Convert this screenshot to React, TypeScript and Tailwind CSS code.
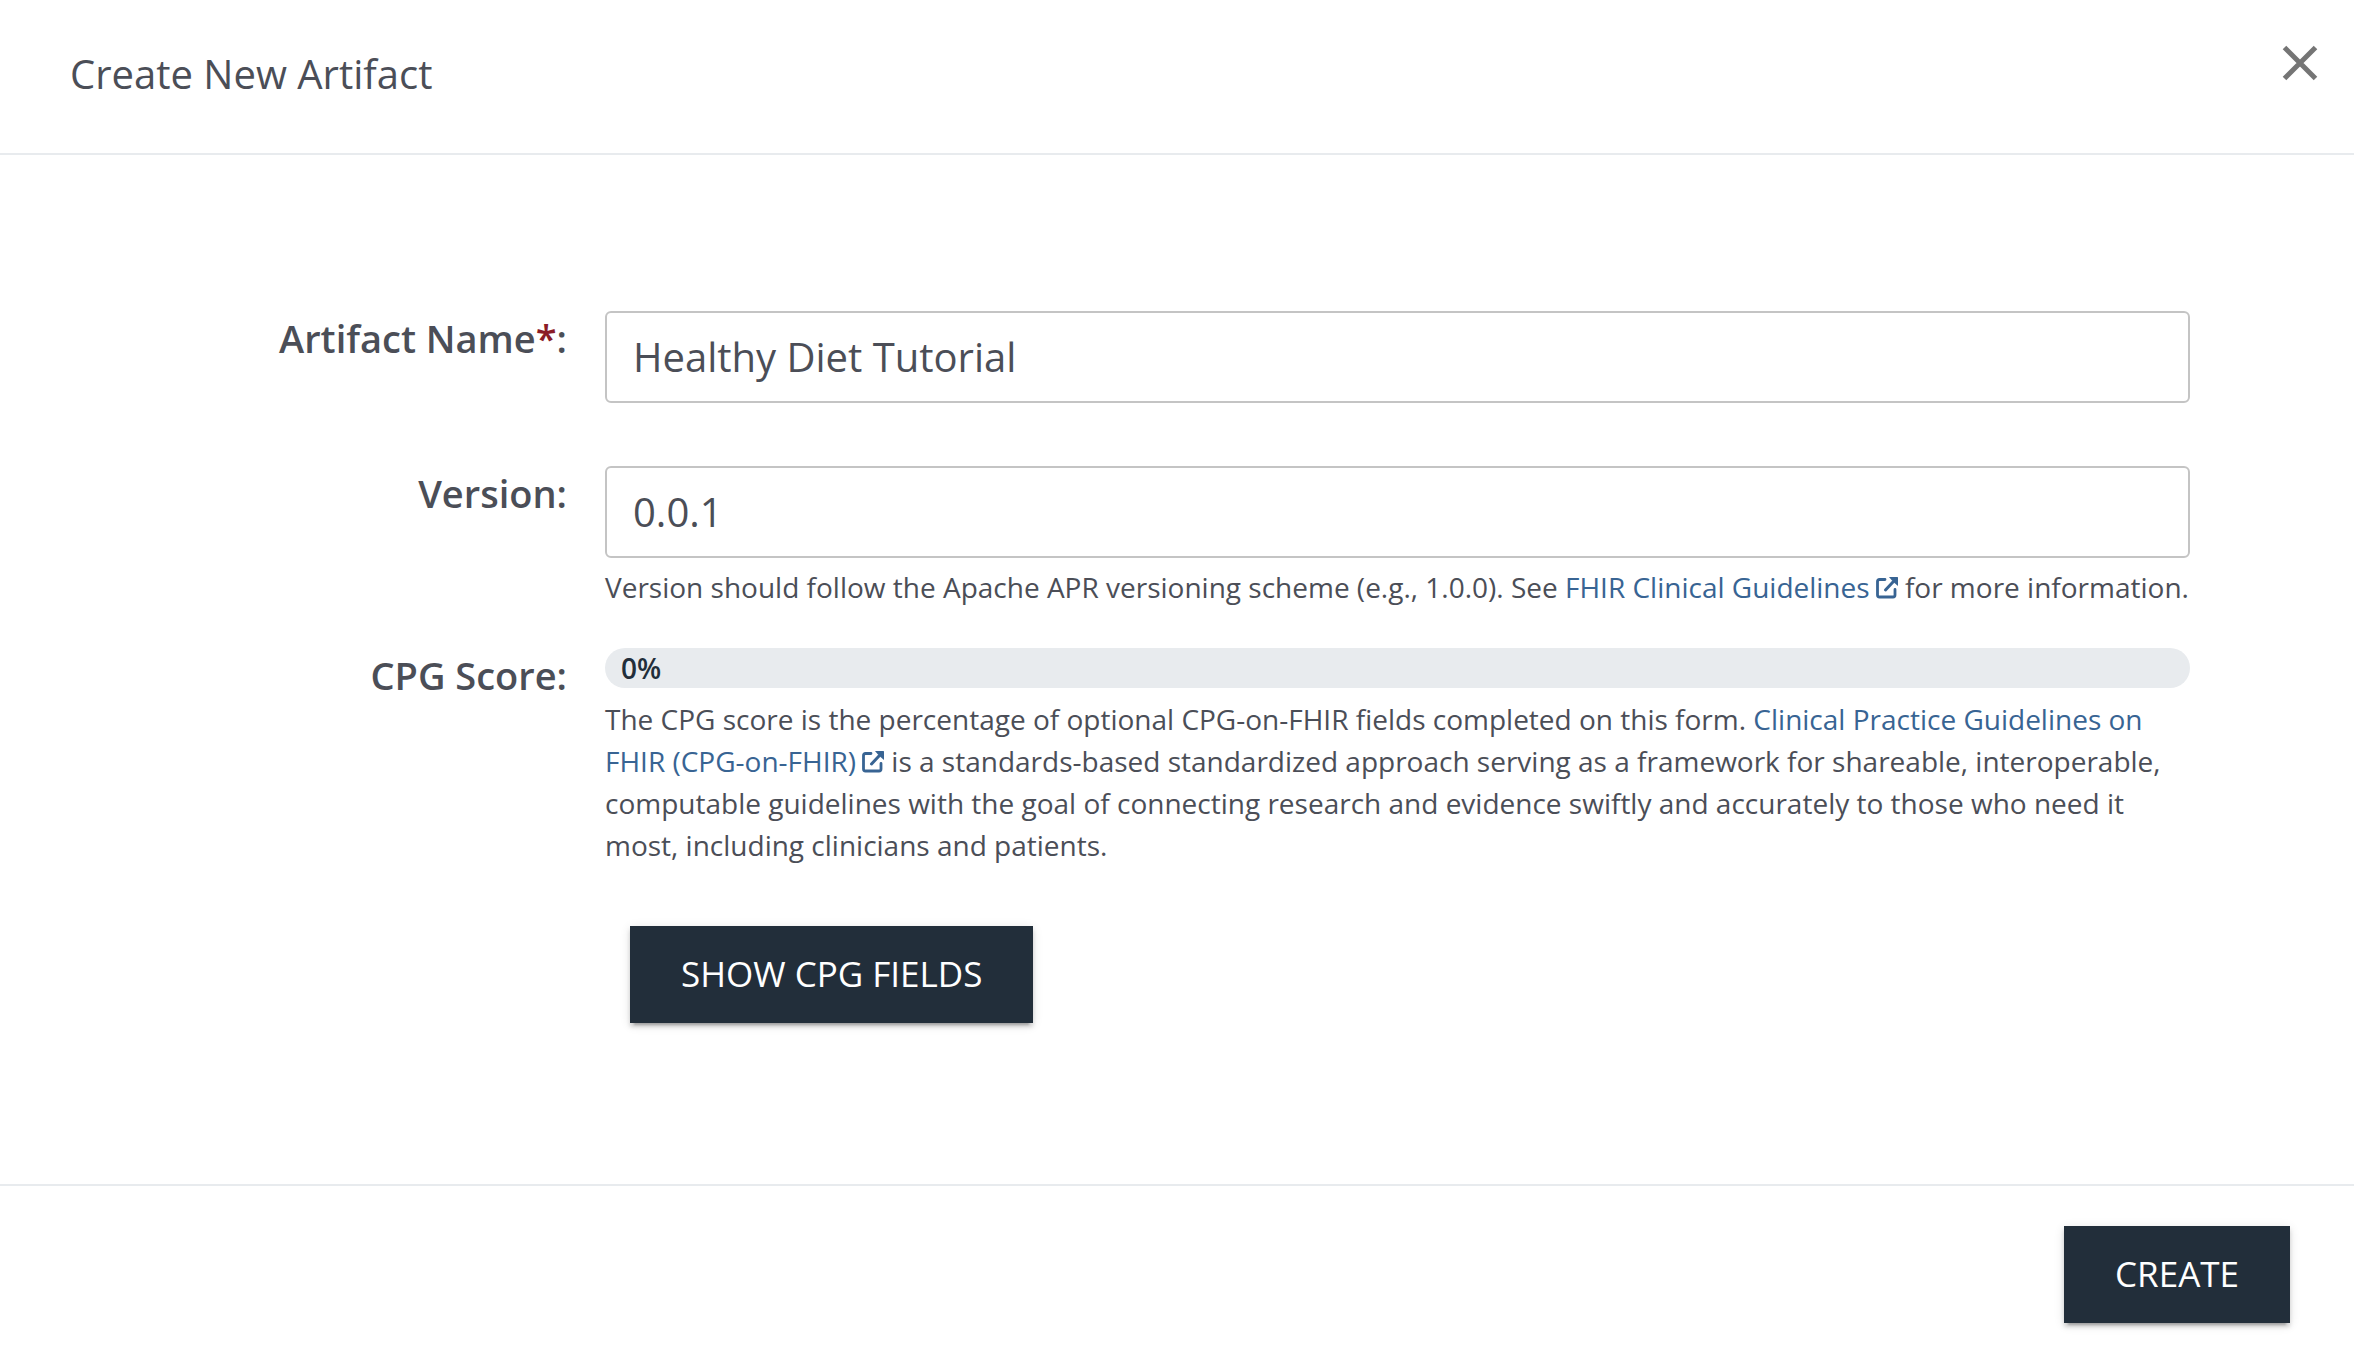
import { useState } from "react";
import type { ReactNode } from "react";

function ExternalIcon() {
  return (
    <svg viewBox="0 0 22 22" className="ml-1.5 inline-block size-[22px] align-[-1px]" aria-hidden="true">
      <path d="M9 2.500H3.500Q1.500 2.500 1.500 4.500V18Q1.500 20 3.500 20H17Q19 20 19 18V12.500" fill="none" stroke="currentColor" strokeWidth="2.800" strokeLinecap="round" />
      <path d="M9.500 13L17 5" fill="none" stroke="currentColor" strokeWidth="3" strokeLinecap="round" />
      <path d="M13 0H21.500Q22 0 22 .5V9L18.500 6L15.500 3Z" fill="currentColor" />
    </svg>
  );
}

function DocLink({ children }: { children: ReactNode }) {
  return (
    <a href="#guidelines" className="text-[#386493]">
      {children}
      <ExternalIcon />
    </a>
  );
}

const labelClass = "w-[567px] shrink-0 text-right text-[38px] leading-[54px] font-semibold";
const fieldClass = "ml-[38px] min-w-0 flex-1";
const inputClass = "block h-[92px] w-full rounded-md border-2 border-[#c4c4c4] bg-white px-[26px] pb-[2px] text-[40px] outline-none";
const helpClass = "text-[28px] leading-[42px]";
const buttonClass = "h-[97px] bg-[#222e3a] px-[51px] text-[35px] text-white uppercase shadow-[0_6px_2px_-4px_rgba(0,0,0,0.2),0_4px_4px_rgba(0,0,0,0.14),0_2px_10px_rgba(0,0,0,0.12)]";

export default function App() {
  const [name, setName] = useState("Healthy Diet Tutorial");
  const [version, setVersion] = useState("0.0.1");
  return (
    <main className="flex min-h-screen flex-col bg-white font-['Open_Sans',sans-serif] text-[#4b4e57]">
      <header className="flex h-[155px] items-start justify-between border-b-2 border-[#e8ebee] pr-[36px] pl-[70px]">
        <h1 className="pt-[46px] text-[40px] leading-[56px]">Create New Artifact</h1>
        <button type="button" aria-label="Close" className="mt-[45px] text-[#757575]">
          <svg viewBox="0 0 36 36" className="size-9" stroke="currentColor" strokeWidth="5" aria-hidden="true">
            <path d="M2.500 2.500L33.500 33.500M33.500 2.500L2.500 33.500" />
          </svg>
        </button>
      </header>
      <form className="flex flex-1 flex-col pt-[156px] pr-[164px]">
        <div className="flex">
          <label htmlFor="name" className={labelClass}>Artifact Name<span className="text-[#8b1c27]">*</span>:</label>
          <div className={fieldClass}>
            <input id="name" className={inputClass} value={name} onChange={(e) => setName(e.target.value)} />
          </div>
        </div>
        <div className="mt-[63px] flex">
          <label htmlFor="version" className={labelClass}>Version:</label>
          <div className={fieldClass}>
            <input id="version" className={inputClass} value={version} onChange={(e) => setVersion(e.target.value)} />
            <p className={`${helpClass} mt-2`}>
              Version should follow the Apache APR versioning scheme (e.g., 1.0.0). See <DocLink>FHIR Clinical Guidelines</DocLink> for more information.
            </p>
          </div>
        </div>
        <div className="mt-10 flex">
          <div id="score-label" className={labelClass}>CPG Score:</div>
          <div className={fieldClass}>
            <div role="progressbar" aria-labelledby="score-label" aria-valuenow={0} className="flex h-10 items-center rounded-full bg-[#e8ebee] px-4 text-[28px] font-semibold text-[#222e3a]">
              0%
            </div>
            <p className={`${helpClass} mt-2.5`}>
              The CPG score is the percentage of optional CPG-on-FHIR fields completed on this form. <DocLink>Clinical Practice Guidelines on FHIR (CPG-on-FHIR)</DocLink> is a standards-based standardized approach serving as a framework for shareable, interoperable, computable guidelines with the goal of connecting research and evidence swiftly and accurately to those who need it most, including clinicians and patients.
            </p>
            <button type="button" className={`${buttonClass} mt-[60px] ml-[25px]`}>Show CPG Fields</button>
          </div>
        </div>
      </form>
      <footer className="flex justify-end border-t-2 border-[#e8ebee] pt-10 pr-16 pb-[27px]">
        <button type="button" className={buttonClass}>Create</button>
      </footer>
    </main>
  );
}
